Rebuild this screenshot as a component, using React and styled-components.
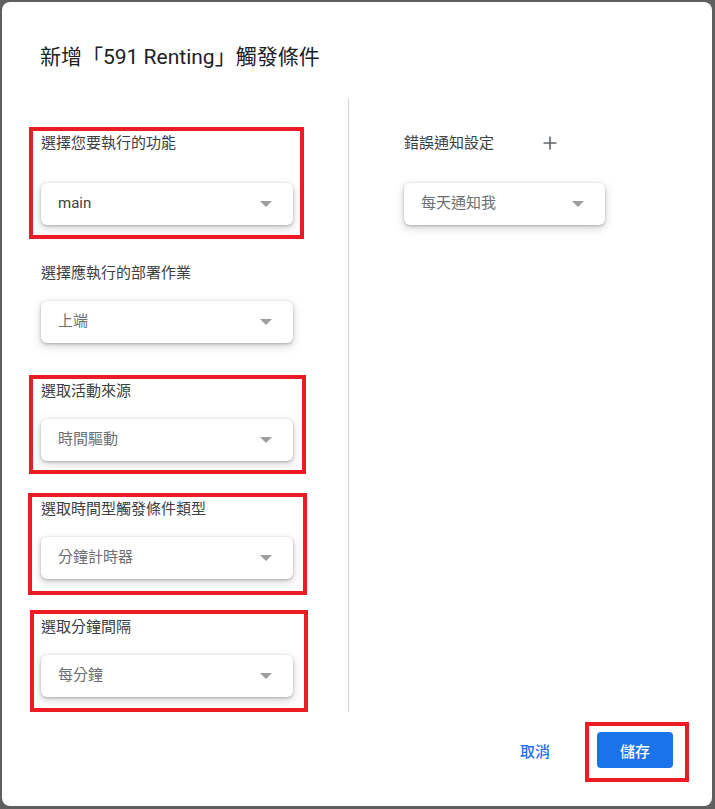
import React from "react";
import styled, { createGlobalStyle } from "styled-components";

const Global = createGlobalStyle`
  html, body { margin: 0; padding: 0; background: #5f5f5f; }
  body { font-family: Roboto, "Noto Sans CJK TC", sans-serif; }
  #root { padding: 2px 3px 3px 2px; }
`;

const Dialog = styled.div`
  width: 710px;
  height: 804px;
  box-sizing: border-box;
  background: #fff;
  border-radius: 8px;
  display: flex;
  flex-direction: column;
  overflow: hidden;
`;

const Title = styled.h1`
  margin: 0;
  padding: 41px 38px 0;
  font-family: Roboto, "Noto Sans CJK TC", sans-serif;
  font-size: 21px;
  line-height: 28px;
  font-weight: 400;
  color: #202124;
`;

const Body = styled.div`
  display: flex;
  margin-top: 27px;
  height: 614px;
`;

const LeftCol = styled.div`
  width: 307px;
  padding: 35px 0 0 39px;
  display: flex;
  flex-direction: column;
  gap: 38px;
`;

const Divider = styled.div`
  width: 1px;
  background: #d2d2d8;
`;

const RightCol = styled.div`
  padding: 35px 0 0 55px;
  display: flex;
  flex-direction: column;
  gap: 30px;
`;

const Field = styled.div`
  position: relative;
  display: flex;
  flex-direction: column;
  gap: ${(p) => p.$gap || 18}px;
  width: ${(p) => p.$w || 252}px;
`;

const Mark = styled.div`
  position: absolute;
  top: ${(p) => p.$t}px;
  left: ${(p) => p.$l}px;
  right: ${(p) => p.$r}px;
  bottom: ${(p) => p.$b}px;
  border: 4px solid #ed1c24;
  pointer-events: none;
`;

const Label = styled.div`
  font-size: 15px;
  line-height: 20px;
  color: #3c4043;
  white-space: nowrap;
`;

const LabelRow = styled.div`
  display: flex;
  align-items: center;
  gap: 48px;
`;

const SelectBox = styled.div`
  height: 42px;
  box-sizing: border-box;
  border-radius: 6px;
  background: #fff;
  box-shadow: 0 1px 3px rgba(60, 64, 67, 0.35), 0 3px 8px 1px rgba(60, 64, 67, 0.18);
  display: flex;
  align-items: center;
  justify-content: space-between;
  padding: 0 21px 3px 17px;
  font-size: 15px;
  line-height: 20px;
  color: ${(p) => (p.$dark ? "#3c4043" : "#6b6f73")};
`;

const Arrow = styled.span`
  width: 0;
  height: 0;
  border-left: 6px solid transparent;
  border-right: 6px solid transparent;
  border-top: 6px solid #9e9e9e;
  margin-top: 3px;
`;

const Plus = styled.svg`
  width: 16px;
  height: 16px;
  display: block;
`;

const Footer = styled.div`
  display: flex;
  justify-content: flex-end;
  align-items: center;
  padding: 20px 39px 0 0;
  gap: 31px;
`;

const TextButton = styled.button`
  border: none;
  background: none;
  padding: 0 16px;
  height: 36px;
  font-family: inherit;
  font-size: 15px;
  font-weight: 500;
  color: #1a73e8;
`;

const ButtonWrap = styled.div`
  position: relative;
`;

const PrimaryButton = styled.button`
  width: 76px;
  height: 36px;
  border: none;
  border-radius: 4px;
  background: #1a73e8;
  color: #fff;
  font-family: inherit;
  font-size: 15px;
  font-weight: 500;
  display: block;
`;

const Select = ({ value, dark }) => (
  <SelectBox $dark={dark}>
    <span>{value}</span>
    <Arrow />
  </SelectBox>
);

export default function App() {
  return (
    <>
      <Global />
      <Dialog>
        <Title>新增「591 Renting」觸發條件</Title>
        <Body>
          <LeftCol>
            <Field $gap={30}>
              <Mark $t={-6} $l={-12} $r={-11} $b={-14} />
              <Label>選擇您要執行的功能</Label>
              <Select value="main" dark />
            </Field>
            <Field>
              <Label>選擇應執行的部署作業</Label>
              <Select value="上端" />
            </Field>
            <Field>
              <Mark $t={-6} $l={-12} $r={-13} $b={-13} />
              <Label>選取活動來源</Label>
              <Select value="時間驅動" />
            </Field>
            <Field>
              <Mark $t={-6} $l={-13} $r={-14} $b={-16} />
              <Label>選取時間型觸發條件類型</Label>
              <Select value="分鐘計時器" />
            </Field>
            <Field>
              <Mark $t={-7} $l={-11} $r={-15} $b={-15} />
              <Label>選取分鐘間隔</Label>
              <Select value="每分鐘" />
            </Field>
          </LeftCol>
          <Divider />
          <RightCol>
            <LabelRow>
              <Label>錯誤通知設定</Label>
              <Plus viewBox="0 0 16 16">
                <path d="M8 1.5v13M1.5 8h13" stroke="#5f6368" strokeWidth="1.6" fill="none" />
              </Plus>
            </LabelRow>
            <Field $w={201}>
              <Select value="每天通知我" />
            </Field>
          </RightCol>
        </Body>
        <Footer>
          <TextButton>取消</TextButton>
          <ButtonWrap>
            <Mark $t={-10} $l={-12} $r={-16} $b={-14} />
            <PrimaryButton>儲存</PrimaryButton>
          </ButtonWrap>
        </Footer>
      </Dialog>
    </>
  );
}
